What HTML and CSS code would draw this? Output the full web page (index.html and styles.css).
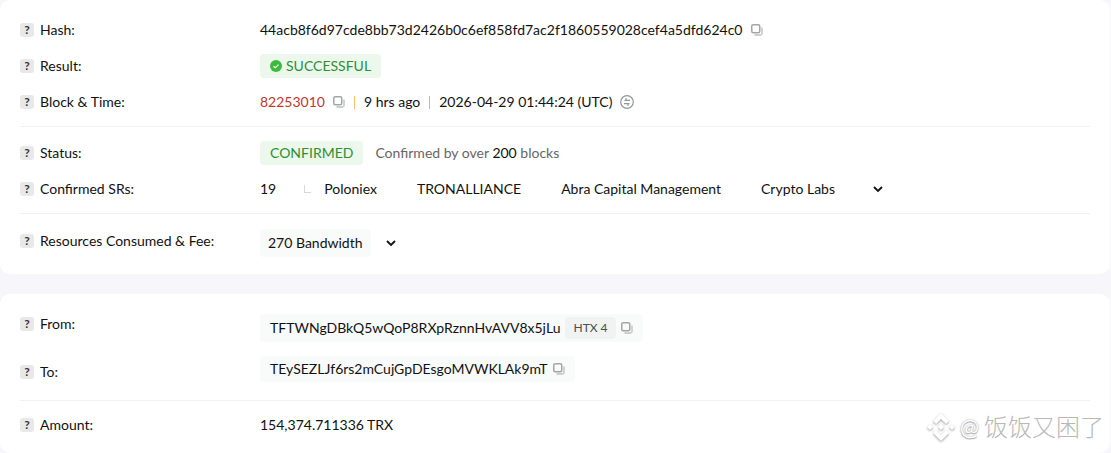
FILE: index.html
```html
<!DOCTYPE html>
<html lang="en">
<head>
    <meta charset="UTF-8">
    <title>Transaction Details</title>
    <link rel="stylesheet" href="styles.css">
</head>
<body>
    <!-- Shared icons -->
    <svg class="sprite" aria-hidden="true">
        <symbol id="copy" viewBox="0 0 12 12">
            <rect x="0.75" y="0.75" width="8" height="8" rx="1.5" fill="none" stroke="#a3a6a6" stroke-width="1.5"/>
            <path d="M11 3.500v5.700a1.800 1.800 0 0 1-1.800 1.800H3.500" fill="none" stroke="#cdcfcf" stroke-width="1.800"/>
        </symbol>
        <symbol id="chevron" viewBox="0 0 10 10">
            <path d="M1 3l4 4 4-4" fill="none" stroke="#111" stroke-width="1.800"/>
        </symbol>
    </svg>

    <!-- Transaction overview -->
    <div class="card">
        <div class="section first">
            <div class="row">
                <div class="label"><span class="help">?</span>Hash:</div>
                <div class="value">
                    <span>44acb8f6d97cde8bb73d2426b0c6ef858fd7ac2f1860559028cef4a5dfd624c0</span>
                    <button class="icon-btn" aria-label="Copy hash"><svg><use href="#copy"/></svg></button>
                </div>
            </div>
            <div class="row">
                <div class="label"><span class="help">?</span>Result:</div>
                <div class="value">
                    <span class="badge">
                        <svg class="check" viewBox="0 0 12 12"><circle cx="6" cy="6" r="6" fill="#3cba3c"/><path d="M3.5 6.2l1.8 1.6 3.2-3.2" fill="none" stroke="#fff" stroke-width="1.2"/></svg>
                        SUCCESSFUL
                    </span>
                </div>
            </div>
            <div class="row">
                <div class="label"><span class="help">?</span>Block &amp; Time:</div>
                <div class="value">
                    <a class="block" href="#">82253010</a>
                    <button class="icon-btn" aria-label="Copy block"><svg><use href="#copy"/></svg></button>
                    <span class="bar bar-warm"></span>
                    <span>9 hrs ago</span>
                    <span class="bar"></span>
                    <span>2026-04-29 01:44:24 (UTC)</span>
                    <button class="icon-btn switch" aria-label="Switch time zone">
                        <svg viewBox="0 0 14 14" fill="none" stroke="#949898"><circle cx="7" cy="7" r="6.3" stroke-width="1.2"/><path d="M10 5.300H4.500M6 3.300v2M4 8.700h5.500M8 8.700v2" stroke-width="1.300"/></svg>
                    </button>
                </div>
            </div>
        </div>

        <div class="section">
            <div class="row">
                <div class="label"><span class="help">?</span>Status:</div>
                <div class="value">
                    <span class="badge">CONFIRMED</span>
                    <span class="note">Confirmed by over <b>200</b> blocks</span>
                </div>
            </div>
            <div class="row">
                <div class="label"><span class="help">?</span>Confirmed SRs:</div>
                <div class="value">
                    <span>19</span>
                    <span class="corner"></span>
                    <div class="names">
                        <span>Poloniex</span>
                        <span>TRONALLIANCE</span>
                        <span>Abra Capital Management</span>
                        <span>Crypto Labs</span>
                    </div>
                    <button class="more more-names" aria-label="Show all"><svg><use href="#chevron"/></svg></button>
                </div>
            </div>
        </div>

        <div class="section resources">
            <div class="row top">
                <div class="label"><span class="help">?</span>Resources Consumed &amp; Fee:</div>
                <div class="value">
                    <span class="pill">270 Bandwidth</span>
                    <button class="more" aria-label="Show details"><svg><use href="#chevron"/></svg></button>
                </div>
            </div>
        </div>
    </div>

    <!-- Transfer -->
    <div class="card">
        <div class="section transfer">
            <div class="row top">
                <div class="label"><span class="help">?</span>From:</div>
                <div class="value">
                    <span class="pill address">
                        TFTWNgDBkQ5wQoP8RXpRznnHvAVV8x5jLu
                        <span class="tag">HTX 4</span>
                        <button class="icon-btn" aria-label="Copy sender"><svg><use href="#copy"/></svg></button>
                    </span>
                </div>
            </div>
            <div class="row top">
                <div class="label low"><span class="help">?</span>To:</div>
                <div class="value">
                    <span class="pill address short">
                        TEySEZLJf6rs2mCujGpDEsgoMVWKLAk9mT
                        <button class="icon-btn" aria-label="Copy recipient"><svg><use href="#copy"/></svg></button>
                    </span>
                </div>
            </div>
        </div>
        <div class="section amount">
            <div class="row">
                <div class="label"><span class="help">?</span>Amount:</div>
                <div class="value">154,374.711336 TRX</div>
            </div>
        </div>
    </div>

    <div class="watermark">
        <svg viewBox="0 0 28 28" fill="#fff">
            <path d="M14 0l8 8-3 3-5-5-5 5-3-3z"/>
            <path d="M14 28l8-8-3-3-5 5-5-5-3 3z"/>
            <path d="M14 11l3 3-3 3-3-3zM3 11l3 3-3 3-3-3zM25 11l3 3-3 3-3-3z"/>
        </svg>
        <span class="at">@</span>
        <span class="author">饭饭又困了</span>
    </div>
</body>
</html>
```

FILE: styles.css
```css
/* General */
* {
    box-sizing: border-box;
}

body {
    margin: 0;
    padding-right: 1px;
    background-color: #f6f6fb;
    color: #111;
    font-family: Lato, "Noto Sans CJK SC", sans-serif;
    font-size: 14px;
    line-height: 20px;
}

.sprite {
    display: none;
}

button {
    display: flex;
    padding: 0;
    border: none;
    background: none;
    cursor: pointer;
}

/* Cards */
.card {
    padding: 0 20px;
    border-radius: 10px;
    background-color: #fff;
}

.card + .card {
    margin-top: 20px;
}

.section {
    padding: 8px 0 6px;
    border-bottom: 1px solid #f0f1f1;
}

.section:last-child {
    border-bottom: none;
}

.first {
    padding-top: 12px;
}

.resources {
    padding: 15px 0 17px;
}

.transfer {
    display: flex;
    flex-direction: column;
    gap: 14px;
    padding: 20px 0 18px;
}

.amount {
    padding: 6px 0 10px;
}

/* Rows */
.row {
    display: flex;
    align-items: center;
    min-height: 36px;
}

.row.top {
    align-items: flex-start;
    min-height: 0;
}

.label {
    display: flex;
    align-items: center;
    gap: 6px;
    flex: 0 0 240px;
}

.resources .label {
    padding-top: 2px;
}

.label.low {
    padding-top: 6px;
}

.help {
    width: 14px;
    height: 14px;
    border-radius: 3px;
    background-color: #e8e8e8;
    color: #333;
    font-size: 12px;
    font-weight: bold;
    line-height: 14px;
    text-align: center;
}

.value {
    display: flex;
    align-items: center;
    gap: 8px;
    white-space: nowrap;
}

/* Badges and pills */
.badge {
    display: flex;
    align-items: center;
    gap: 4px;
    height: 24px;
    padding: 0 10px;
    border-radius: 4px;
    background-color: #ebf8eb;
    color: #2f8f35;
}

.check {
    width: 12px;
    height: 12px;
}

.pill {
    display: flex;
    align-items: center;
    height: 28px;
    padding: 0 8px;
    border-radius: 4px;
    background-color: #f9fafa;
}

.address {
    gap: 5px;
    padding: 0 10px;
}

.short {
    height: 26px;
}

.tag {
    padding: 0 8px;
    border-radius: 4px;
    background-color: #f1f3f3;
    color: #474f4f;
    font-size: 12px;
    line-height: 22px;
}

/* Details */
.icon-btn svg {
    width: 12px;
    height: 12px;
}

.switch svg {
    width: 14px;
    height: 14px;
}

.block {
    color: #c23631;
    text-decoration: none;
}

.bar {
    width: 1px;
    height: 13px;
    margin: 0 1px;
    background-color: #b5baba;
}

.bar-warm {
    background-color: #f0c070;
}

.note {
    margin-left: 4px;
    color: #666;
}

.note b {
    color: #111;
    font-weight: normal;
}

.corner {
    width: 7px;
    height: 8px;
    margin: 0 5px 0 20px;
    border: solid #d8d8d8;
    border-width: 0 0 1px 1px;
}

.names {
    display: flex;
    align-items: center;
    gap: 40px;
}

.more svg {
    width: 10px;
    height: 10px;
}

.pill + .more {
    margin-left: 7px;
}

.more-names {
    margin-left: 30px;
}

/* Watermark */
.watermark {
    position: absolute;
    right: 7px;
    top: 412px;
    display: flex;
    align-items: center;
    gap: 5px;
    font-size: 24px;
    line-height: 30px;
}

.watermark svg {
    width: 28px;
    height: 28px;
    overflow: visible;
    filter: drop-shadow(0 1px 1px #999);
}

.at {
    color: #fff;
    font-size: 23px;
    text-shadow: 0 0 2px #999, 0 1px 1px #aaa;
}

.author {
    color: #b8b8b8;
    font-weight: 300;
}
```
